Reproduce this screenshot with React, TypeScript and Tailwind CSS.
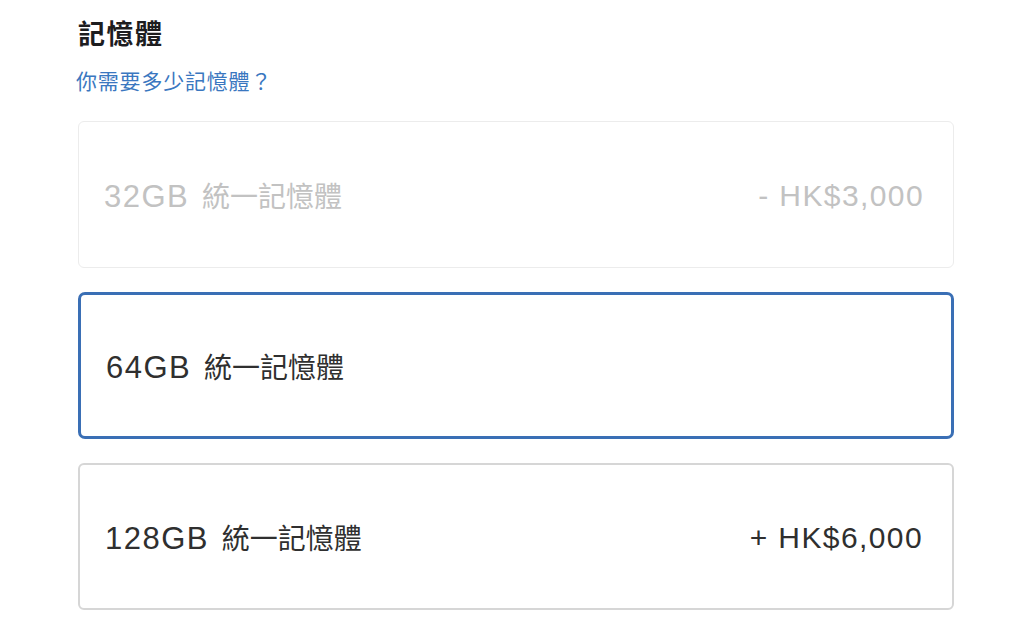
const options = [
  { size: '32GB', price: '- HK$3,000', state: 'disabled' },
  { size: '64GB', price: '', state: 'selected' },
  { size: '128GB', price: '+ HK$6,000', state: 'normal' },
]

export default function App() {
  return (
    <div
      className="w-[1024px] h-[644px] bg-white overflow-hidden"
      style={{ fontFamily: '"Liberation Sans", "Noto Sans CJK TC", sans-serif' }}
    >
      <div className="pl-[78px] pt-[18px] w-[954px]">
        {/* Section heading */}
        <h2 className="text-[27px] leading-[34px] font-bold text-[#1d1d1f] tracking-[1.5px]">記憶體</h2>
        <a href="#" className="block mt-[16px] -ml-[2px] text-[21px] leading-[28px] tracking-[0.8px] text-[#3a77c0]">
          你需要多少記憶體？
        </a>

        {/* Memory options */}
        <div className="mt-[25px] flex flex-col gap-[24px]">
          {options.map((o) => {
            const box =
              o.state === 'selected'
                ? 'border-[3px] border-[#3a6fb5] rounded-[7px]'
                : o.state === 'disabled'
                ? 'border-[1.5px] border-[#ececec] rounded-[6px]'
                : 'border-2 border-[#d6d6d6] rounded-[6px]'
            const text = o.state === 'disabled' ? 'text-[#c2c2c2]' : 'text-[#2f2f2f]'
            return (
              <div
                key={o.size}
                className={`h-[147px] flex items-center justify-between pt-[3px] pl-[25px] pr-[29px] ${box} ${text}`}
              >
                <span className="leading-none whitespace-nowrap">
                  <span className="text-[31px] tracking-[1.5px]">{o.size}</span>
                  <span className="text-[28px] ml-[5px]"> 統一記憶體</span>
                </span>
                {o.price && <span className="text-[30px] leading-none tracking-[1.4px]">{o.price}</span>}
              </div>
            )
          })}
        </div>
      </div>
    </div>
  )
}
